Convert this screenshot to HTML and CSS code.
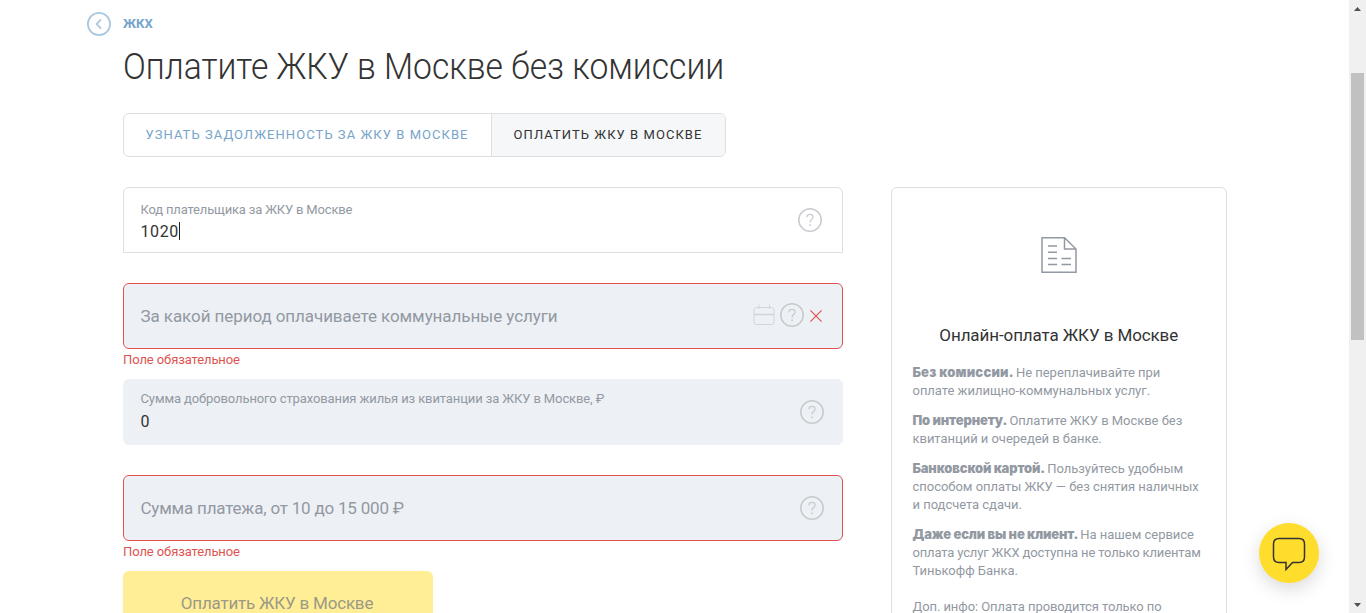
FILE: index.html
```html
<!DOCTYPE html>
<html lang="ru">
<head>
<meta charset="utf-8">
<title>Оплатите ЖКУ в Москве без комиссии</title>
<link rel="stylesheet" href="styles.css">
</head>
<body>
<svg class="sprite" aria-hidden="true">
  <symbol id="help" viewBox="0 0 24 24"><circle cx="12" cy="12" r="11.2" fill="none" stroke="currentColor" stroke-width="1.5"/><path d="M8.9 9.3c.1-1.8 1.3-2.9 3.1-2.9 1.9 0 3.1 1.1 3.1 2.7 0 2.3-3 2.5-3 4.6v.9" fill="none" stroke="currentColor" stroke-width="1.2"/><circle cx="12.1" cy="17.2" r=".9" fill="currentColor"/></symbol>
</svg>
<div class="viewport">
  <div class="page">
    <nav class="crumbs">
      <svg class="back" viewBox="0 0 24 24"><circle cx="12" cy="12" r="11.1" fill="none" stroke="#a9c8e0" stroke-width="1.8"/><path d="M14 7.3 9.7 12l4.3 4.7" fill="none" stroke="#a9c8e0" stroke-width="1.8"/></svg>
      <a class="crumb">ЖКХ</a>
    </nav>
    <h1 class="title">Оплатите ЖКУ в Москве без комиссии</h1>
    <div class="tabs">
      <a class="tab tab-debt"><span>Узнать задолженность за ЖКУ в Москве</span></a>
      <a class="tab tab-active"><span>Оплатить ЖКУ в Москве</span></a>
    </div>
    <div class="columns">
      <form class="form">
        <div class="field field-focus">
          <div class="field-text"><span class="label label-code">Код плательщика за ЖКУ в Москве</span><span class="value">1020<i class="caret"></i></span></div>
          <svg class="help"><use href="#help"/></svg>
        </div>
        <div class="field field-error field-period">
          <span class="placeholder ph-period">За какой период оплачиваете коммунальные услуги</span>
          <svg class="calendar" viewBox="0 0 22 22"><path d="M3.5 3.5h15q2.5 0 2.5 2.5v12q0 2.5-2.5 2.5h-15q-2.5 0-2.5-2.5v-12q0-2.5 2.5-2.5M6 .5v4.5M16.5 .5v4.5" fill="none" stroke="currentColor"/><path d="M1 10.500h20" stroke="currentColor" stroke-width="1.500"/></svg>
          <svg class="help"><use href="#help"/></svg>
          <svg class="clear" viewBox="0 0 12 12"><path d="m.4.4 11.200 11.200m0-11.200L.4 11.600" stroke="#dd5350" stroke-width="1.200"/></svg>
        </div>
        <p class="error">Поле обязательное</p>
        <div class="field field-insurance">
          <div class="field-text"><span class="label label-insurance">Сумма добровольного страхования жилья из квитанции за ЖКУ в Москве, ₽</span><span class="value">0</span></div>
          <svg class="help"><use href="#help"/></svg>
        </div>
        <div class="field field-error field-sum">
          <span class="placeholder ph-sum">Сумма платежа, от 10 до 15 000 ₽</span>
          <svg class="help"><use href="#help"/></svg>
        </div>
        <p class="error">Поле обязательное</p>
        <button class="submit" type="button"><span>Оплатить ЖКУ в Москве</span></button>
      </form>
      <aside class="card">
        <svg class="doc" viewBox="0 0 36 36"><path d="M1 .8h22.500L35 12v23.200H1ZM23.500 1v11H35" fill="none" stroke="#9299a2" stroke-width="1.500"/><path d="M7 9h9M7 15.200h9M7 21.500h9M7 27.500h9M20.500 21.500h9.500M20.500 27.500h9.500" stroke="#9299a2" stroke-width="1.600"/></svg>
        <h2 class="card-title">Онлайн-оплата ЖКУ в Москве</h2>
        <p><b class="wide">Без комиссии.</b> <span>Не переплачивайте при</span><br><span>оплате жилищно-коммунальных услуг.</span></p>
        <p><b>По интернету.</b> <span>Оплатите ЖКУ в Москве без</span><br><span>квитанций и очередей в банке.</span></p>
        <p><b>Банковской картой.</b> <span>Пользуйтесь удобным</span><br><span>способом оплаты ЖКУ — без снятия наличных</span><br><span>и подсчета сдачи.</span></p>
        <p><b>Даже если вы не клиент.</b> <span>На нашем сервисе</span><br><span class="tight">оплата услуг ЖКХ доступна не только клиентам</span><br><span>Тинькофф Банка.</span></p>
        <p class="extra">Доп. инфо: Оплата проводится только по</p>
      </aside>
    </div>
  </div>
  <div class="scrollbar">
    <svg class="arrow" viewBox="0 0 7 4"><path d="M0 4 3.500 0 7 4Z" fill="#505050"/></svg>
    <div class="thumb"></div>
    <svg class="arrow arrow-down" viewBox="0 0 7 4"><path d="M0 0h7L3.500 4Z" fill="#505050"/></svg>
  </div>
</div>
<button class="chat" type="button" aria-label="Чат"><svg viewBox="0 0 34 34"><path d="M7 1.500h20q5.500 0 5.500 5.500v13q0 5.500-5.500 5.500h-6.500L14 32.500v-7H7q-5.500 0-5.500-5.500V7Q1.500 1.500 7 1.500Z" fill="none" stroke="#333" stroke-width="1.500"/></svg></button>
</body>
</html>
```
FILE: styles.css
```css
* { box-sizing: border-box; }
body { margin: 0; background: #fff; color: #333; font-family: Roboto, "Liberation Sans", sans-serif; overflow: hidden; }
p, h1, h2 { margin: 0; }
.sprite { display: none; }
.viewport { display: flex; height: 613px; overflow: hidden; }
.page { flex: 1; padding: 12px 0 0 123px; }
.crumbs { display: flex; align-items: center; height: 24px; margin-left: -36px; }
.back { width: 24px; height: 24px; margin-right: 12px; }
.crumb { padding-bottom: 2px; color: #77a4cb; font-size: 13px; font-weight: 700; letter-spacing: .1px; }
.title { margin-top: 8px; height: 44px; padding-top: 1px; line-height: 44px; font-size: 37px; font-weight: 300; letter-spacing: 0; white-space: nowrap; transform: scaleX(.909); transform-origin: 0 0; }
.tabs { display: flex; width: 603px; height: 44px; margin-top: 25px; border: 1px solid #dddfe0; border-radius: 6px; overflow: hidden; }
.tab { display: flex; align-items: center; justify-content: center; padding-bottom: 2px; color: #77a4cb; font-size: 13px; letter-spacing: 1.05px; text-transform: uppercase; white-space: nowrap; }
.tab-debt { width: 367px; padding-right: 1px; }
.tab-active { flex: 1; padding-right: 1px; color: #333; background: #f6f7f8; border-left: 1px solid #dddfe0; }
.columns { display: flex; gap: 48px; margin-top: 30px; align-items: flex-start; }
.form { width: 720px; }
.field { display: flex; align-items: center; height: 66px; padding: 0 18px 0 16.5px; border: 1px solid #edf0f5; border-radius: 6px; background: #edf0f5; color: #c6cacd; }
.field-focus { padding-right: 20px; border-color: #dddfe0; border-radius: 6px 6px 0 0; background: #fff; color: #c9cbd0; }
.field-error { border-color: #dd5350; }
.field-period, .field-sum { margin-top: 30px; }
.field-text { display: flex; flex-direction: column; flex: 1; height: 44px; }
.field-insurance .field-text { height: 50px; }
.label { height: 22px; line-height: 24px; color: #9299a2; font-size: 13px; letter-spacing: -.17px; white-space: nowrap; }
.label-insurance { height: 23px; letter-spacing: -.11px; }
.value { display: flex; align-items: center; height: 22px; color: #333; font-size: 16px; letter-spacing: .6px; }
.caret { width: 1px; height: 18px; background: #222; }
.placeholder { flex: 1; color: #9299a2; font-size: 17px; letter-spacing: -.08px; white-space: nowrap; }
.ph-sum { letter-spacing: -.2px; }
.help { width: 24px; height: 24px; flex: none; }
.field-period .help { margin-bottom: 2px; }
.calendar { width: 22px; height: 22px; margin: 0 5px 2px 0; color: #d2d5d8; }
.clear { width: 12px; height: 12px; margin-left: 6px; }
.field-period { padding-right: 20px; }
.error { height: 30px; line-height: 22px; color: #dd5350; font-size: 13px; letter-spacing: -.1px; }
.submit { display: flex; width: 310px; height: 64px; padding: 0 2px 0 0; align-items: center; justify-content: center; border: 0; border-radius: 6px; background: #ffee96; color: #9c9986; font: 17px Roboto, "Liberation Sans", sans-serif; letter-spacing: -.2px; }
.card { width: 336px; height: 500px; padding: 48px 0 0 20.5px; border: 1px solid #dddfe0; border-radius: 6px; color: #9299a2; font-size: 13px; line-height: 18px; letter-spacing: -.03px; white-space: nowrap; }
.card p { height: 36px; margin-bottom: 12px; }
.card p:nth-of-type(3), .card p:nth-of-type(4) { height: 54px; }
.card b { font-family: Inter, Roboto, sans-serif; font-weight: 900; letter-spacing: -.15px; margin-right: -1px; line-height: 1; }
.card .wide { letter-spacing: .2px; }
.card .tight { letter-spacing: -.15px; }
.doc { display: block; width: 36px; height: 38px; margin-left: 128.5px; }
.card-title { height: 24px; line-height: 24px; margin: 49px 21px 17px 0; color: #333; font-size: 17px; font-weight: 400; letter-spacing: -.1px; text-align: center; }
.card .extra { margin-top: 18px; letter-spacing: -.08px; }
.scrollbar { display: flex; flex-direction: column; align-items: center; width: 17px; padding: 7px 0 6px; background: #f0f0f0; }
.arrow { width: 7px; height: 4px; }
.thumb { width: 13px; height: 267px; margin-top: 62px; background: #c1c1c1; }
.arrow-down { margin-top: auto; }
.chat { position: fixed; left: 1259px; top: 523px; display: flex; align-items: center; justify-content: center; width: 60px; height: 60px; padding: 0; border: 0; border-radius: 50%; background: #ffdd2d; box-shadow: 0 6px 18px rgba(0,0,0,.15); }
.chat svg { width: 34px; height: 34px; margin-top: 2px; }
```
